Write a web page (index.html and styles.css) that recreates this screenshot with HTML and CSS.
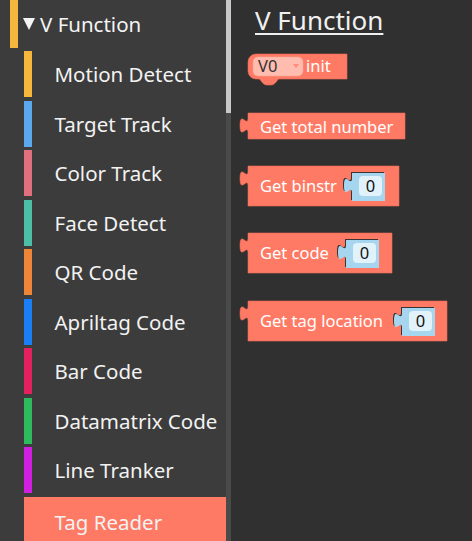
FILE: index.html
```html
<!DOCTYPE html>
<html>
<head>
<meta charset="utf-8">
<link rel="stylesheet" href="styles.css">
</head>
<body>
<div class="app">
  <aside class="toolbox">
    <div class="cat-header"><span class="bar bar-yellow"></span><span class="tri"></span><span class="label">V Function</span></div>
    <div class="cat"><span class="bar bar-yellow"></span>Motion Detect</div>
    <div class="cat"><span class="bar bar-sky"></span>Target Track</div>
    <div class="cat"><span class="bar bar-rose"></span>Color Track</div>
    <div class="cat"><span class="bar bar-teal"></span>Face Detect</div>
    <div class="cat"><span class="bar bar-orange"></span>QR Code</div>
    <div class="cat"><span class="bar bar-blue"></span>Apriltag Code</div>
    <div class="cat"><span class="bar bar-crimson"></span>Bar Code</div>
    <div class="cat"><span class="bar bar-green"></span>Datamatrix Code</div>
    <div class="cat"><span class="bar bar-magenta"></span>Line Tranker</div>
    <div class="cat cat-selected"><span class="bar bar-salmon"></span>Tag Reader</div>
  </aside>
  <div class="scroll"><div class="thumb"></div></div>
  <main class="workspace">
    <h1 class="ws-title">V Function</h1>

    <svg class="blk blk-init" width="100" height="32" viewBox="0 0 100 32">
      <path class="blk-body" d="M8,0 H99 V25 H31 C29,25 28,31 23,31 H19 C14,31 13,25 11,25 H8 A8,8 0 0 1 0,17 V8 A8,8 0 0 1 8,0 Z"/>
      <rect class="dd" x="5" y="3" width="50" height="19" rx="5"/>
      <text class="blk-text dd-text" x="10" y="18">V0</text>
      <path class="dd-arrow" d="M45,10 h6 l-3,4 z"/>
      <text class="blk-text" x="58" y="18">init</text>
    </svg>

    <svg class="blk blk-total" width="166" height="27" viewBox="0 0 166 27">
      <path class="blk-body" d="M8,0 V5 C8,15 0,-3 0,12.5 S8,10 8,20 V26 H165 V0 Z"/>
      <text class="blk-text" x="20" y="19.5">Get total number</text>
    </svg>

    <svg class="blk blk-binstr" width="160" height="41" viewBox="0 0 160 41">
      <path class="blk-body" d="M8,0 V5 C8,15 0,-3 0,12.5 S8,10 8,20 V40 H159 V0 Z"/>
      <text class="blk-text" x="20" y="26">Get binstr</text>
      <g transform="translate(112,7)">
        <path class="slot" transform="translate(-1,-1)" d="M0,0 V5 C0,15 -8,-3 -8,12.5 S0,10 0,20 V28 H33 V0 Z"/>
        <path class="num-body" d="M0,0 V5 C0,15 -8,-3 -8,12.5 S0,10 0,20 V28 H33 V0 Z"/>
        <rect class="num-field" x="7" y="3" width="23" height="20" rx="4"/>
        <text class="blk-text num-text" x="18.5" y="19">0</text>
      </g>
    </svg>

    <svg class="blk blk-code" width="153" height="41" viewBox="0 0 153 41">
      <path class="blk-body" d="M8,0 V5 C8,15 0,-3 0,12.5 S8,10 8,20 V40 H152 V0 Z"/>
      <text class="blk-text" x="20" y="26">Get code</text>
      <g transform="translate(106,7)">
        <path class="slot" transform="translate(-1,-1)" d="M0,0 V5 C0,15 -8,-3 -8,12.5 S0,10 0,20 V28 H33 V0 Z"/>
        <path class="num-body" d="M0,0 V5 C0,15 -8,-3 -8,12.5 S0,10 0,20 V28 H33 V0 Z"/>
        <rect class="num-field" x="7" y="3" width="23" height="20" rx="4"/>
        <text class="blk-text num-text" x="18.5" y="19">0</text>
      </g>
    </svg>

    <svg class="blk blk-tag" width="208" height="41" viewBox="0 0 208 41">
      <path class="blk-body" d="M8,0 V5 C8,15 0,-3 0,12.5 S8,10 8,20 V40 H207 V0 Z"/>
      <text class="blk-text" x="20" y="26">Get tag location</text>
      <g transform="translate(162,7)">
        <path class="slot" transform="translate(-1,-1)" d="M0,0 V5 C0,15 -8,-3 -8,12.5 S0,10 0,20 V28 H33 V0 Z"/>
        <path class="num-body" d="M0,0 V5 C0,15 -8,-3 -8,12.5 S0,10 0,20 V28 H33 V0 Z"/>
        <rect class="num-field" x="7" y="3" width="23" height="20" rx="4"/>
        <text class="blk-text num-text" x="18.5" y="19">0</text>
      </g>
    </svg>
  </main>
</div>
</body>
</html>
```

FILE: styles.css
```css
html, body {
  margin: 0;
  padding: 0;
  background: #303030;
}

.app {
  display: flex;
  width: 472px;
  height: 541px;
  overflow: hidden;
  font-family: "Noto Sans", "Open Sans", sans-serif;
}

.toolbox {
  flex: none;
  width: 226px;
  background: #3c3c3c;
  overflow: hidden;
}

.cat-header {
  display: flex;
  align-items: center;
  height: 48px;
  margin-bottom: 3px;
  padding-left: 10px;
  color: #f4f4f4;
  font-size: 20.5px;
  line-height: 48px;
}

.cat-header .bar {
  width: 8px;
  height: 48px;
  margin-right: 5px;
}

.tri {
  width: 0;
  height: 0;
  border-left: 6.5px solid transparent;
  border-right: 6.5px solid transparent;
  border-top: 12px solid #f4f4f4;
  margin-right: 5px;
  margin-top: 0;
}

.cat {
  display: flex;
  align-items: center;
  margin-left: 24px;
  height: 46px;
  margin-bottom: 3.5px;
  color: #f2f2f2;
  font-size: 20.5px;
  line-height: 46px;
  white-space: nowrap;
}

.cat .bar {
  flex: none;
  width: 8px;
  height: 46px;
  margin-right: 22.5px;
}

.cat-selected {
  background: #ff7a64;
  height: 50px;
}

.cat-selected .bar {
  height: 50px;
}

.bar-yellow { background: #f6b73c; }
.bar-sky { background: #5ba8ee; }
.bar-rose { background: #e0707e; }
.bar-teal { background: #4cc0a6; }
.bar-orange { background: #ef8538; }
.bar-blue { background: #1a7ff4; }
.bar-crimson { background: #e2215e; }
.bar-green { background: #2dbb5e; }
.bar-magenta { background: #d11fe0; }
.bar-salmon { background: #ff7a64; }

.scroll {
  flex: none;
  width: 5px;
  background: #4a4a4a;
}

.thumb {
  height: 113px;
  background: #c8c8c8;
}

.workspace {
  flex: 1;
  position: relative;
  background: #303030;
}

.ws-title {
  margin: 0;
  padding: 4px 0 0 24px;
  font-size: 26px;
  font-weight: normal;
  line-height: 32px;
  color: #f0f0f0;
  text-decoration: underline;
  text-decoration-thickness: 2px;
  text-underline-offset: 3px;
}

.blk {
  position: absolute;
  overflow: visible;
}

.blk-init { left: 17px; top: 54px; }
.blk-total { left: 9px; top: 113px; }
.blk-binstr { left: 9px; top: 166px; }
.blk-code { left: 9px; top: 233px; }
.blk-tag { left: 9px; top: 301px; }

.blk-body {
  fill: #ff7a64;
  stroke: #e96c57;
  stroke-width: 0.6;
}

.blk-text {
  font-family: "Noto Sans", "Open Sans", sans-serif;
  font-size: 16.5px;
  fill: #ffffff;
}

.dd {
  fill: #ffbcaf;
  stroke: #f4a797;
  stroke-width: 0.6;
}

.dd-text {
  fill: #333333;
}

.dd-arrow {
  fill: #ff8b78;
}

.slot {
  fill: #3a3434;
}

.num-body {
  fill: #a6d6ef;
}

.num-field {
  fill: #e2f2fa;
}

.num-text {
  fill: #111111;
  text-anchor: middle;
}
```
